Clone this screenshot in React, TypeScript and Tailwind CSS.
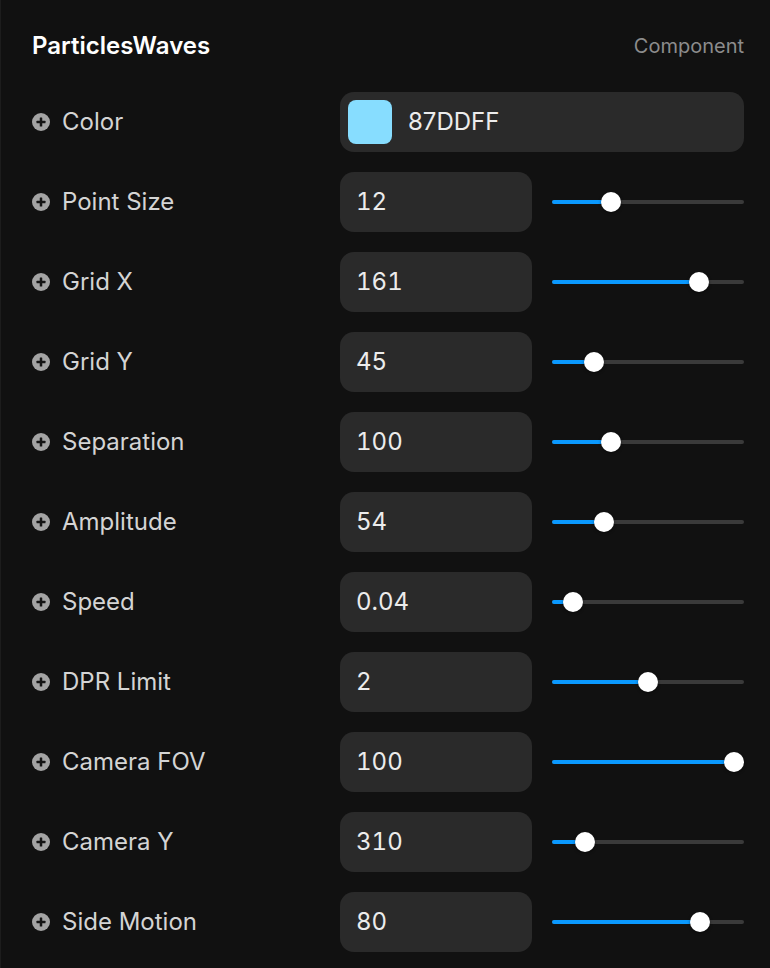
import React from "react";

type Row = { label: string; value: string; p: number };

const rows: Row[] = [
  { label: "Point Size", value: "12", p: 0.285 },
  { label: "Grid X", value: "161", p: 0.797 },
  { label: "Grid Y", value: "45", p: 0.186 },
  { label: "Separation", value: "100", p: 0.285 },
  { label: "Amplitude", value: "54", p: 0.244 },
  { label: "Speed", value: "0.04", p: 0.064 },
  { label: "DPR Limit", value: "2", p: 0.5 },
  { label: "Camera FOV", value: "100", p: 1 },
  { label: "Camera Y", value: "310", p: 0.134 },
  { label: "Side Motion", value: "80", p: 0.802 },
];

function PlusIcon() {
  return (
    <svg width="18" height="18" viewBox="0 0 18 18" className="shrink-0">
      <circle cx="9" cy="9" r="9" fill="#a3a3a3" />
      <rect x="4.5" y="7.75" width="9" height="2.5" rx="0.5" fill="#141414" />
      <rect x="7.75" y="4.5" width="2.5" height="9" rx="0.5" fill="#141414" />
    </svg>
  );
}

function Label({ text }: { text: string }) {
  return (
    <div className="flex items-center gap-3 text-[24px] text-[#d4d4d4]">
      <PlusIcon />
      <span>{text}</span>
    </div>
  );
}

function Slider({ p }: { p: number }) {
  const x = 10 + p * 172;
  return (
    <div className="relative h-[60px] w-[192px]">
      <div className="absolute left-0 right-0 top-[28px] h-[4px] rounded-full bg-[#3a3a3a]" />
      <div
        className="absolute left-0 top-[28px] h-[4px] rounded-full bg-[#0a99ff]"
        style={{ width: x }}
      />
      <div
        className="absolute top-[20px] h-[20px] w-[20px] rounded-full bg-white shadow-[0_1px_3px_rgba(0,0,0,0.5)]"
        style={{ left: x - 10 }}
      />
    </div>
  );
}

export default function App() {
  return (
    <div
      className="min-h-[968px] w-[770px] border-l border-[#1d1d1d] bg-[#111111] pl-[31px] pr-[26px] pt-4 pb-4"
      style={{ fontFamily: "Inter, 'Noto Sans', sans-serif" }}
    >
      <div className="flex h-[60px] items-center justify-between">
        <span className="text-[24px] font-semibold text-white">ParticlesWaves</span>
        <span className="text-[20px] text-[#8c8c8c]">Component</span>
      </div>
      <div className="mt-4 flex flex-col gap-5">
        <div className="grid grid-cols-[308px_1fr] items-center">
          <Label text="Color" />
          <div className="flex h-[60px] items-center gap-4 rounded-[14px] bg-[#2a2a2a] px-2">
            <div className="h-[44px] w-[44px] rounded-[8px] bg-[#87DDFF]" />
            <span className="text-[24px] text-[#ececec]">87DDFF</span>
          </div>
        </div>
        {rows.map((r) => (
          <div key={r.label} className="grid grid-cols-[308px_1fr] items-center">
            <Label text={r.label} />
            <div className="flex items-center gap-5">
              <div className="flex h-[60px] w-[192px] items-center rounded-[14px] bg-[#2a2a2a] px-4 text-[24px] tabular-nums text-[#ececec]">
                {r.value}
              </div>
              <Slider p={r.p} />
            </div>
          </div>
        ))}
      </div>
    </div>
  );
}
